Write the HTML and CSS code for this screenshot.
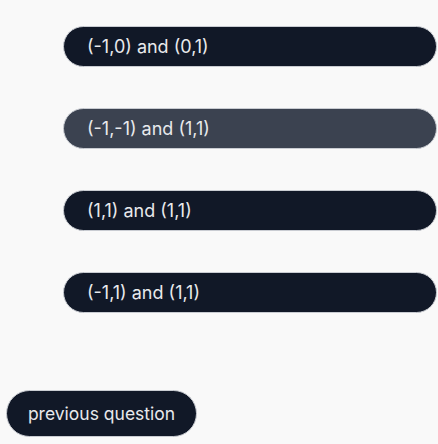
FILE: index.html
```html
<!DOCTYPE html>
<html>
<head>
<meta charset="utf-8">
<link rel="stylesheet" href="styles.css">
</head>
<body>
<div class="page">
  <div class="options">
    <button class="option">(-1,0) and (0,1)</button>
    <button class="option option-active">(-1,-1) and (1,1)</button>
    <button class="option">(1,1) and (1,1)</button>
    <button class="option">(-1,1) and (1,1)</button>
  </div>
  <div class="nav">
    <button class="prev">previous question</button>
  </div>
</div>
</body>
</html>
```
FILE: styles.css
```css
html, body {
  margin: 0;
  padding: 0;
  background: #f9f9f9;
}
.page {
  width: 438px;
  height: 444px;
  font-family: Inter, "Noto Sans", sans-serif;
}
.options {
  display: flex;
  flex-direction: column;
  gap: 41px;
  padding: 26px 1px 0 63px;
}
.option {
  height: 41px;
  border-radius: 21px;
  border: 1px solid #c9ccd2;
  background: #111827;
  color: #e8e9ec;
  font-family: inherit;
  font-size: 18px;
  text-align: left;
  padding: 0 0 0 23px;
  line-height: 1;
}
.option-active {
  background: #3b4250;
}
.nav {
  padding: 77px 0 0 6px;
}
.prev {
  height: 47px;
  width: 191px;
  border-radius: 24px;
  border: 1px solid #c9ccd2;
  background: #111827;
  color: #e8e9ec;
  font-family: inherit;
  font-size: 17.5px;
  padding: 0;
  line-height: 1;
}
```
